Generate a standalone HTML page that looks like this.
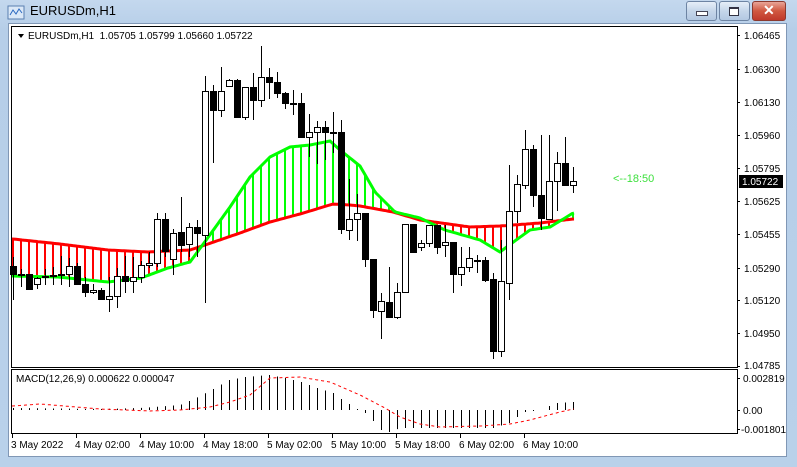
<!DOCTYPE html>
<html><head><meta charset="utf-8"><style>
html,body{margin:0;padding:0;width:797px;height:467px;overflow:hidden;background:#b9d1ea;font-family:"Liberation Sans",sans-serif}
#win{position:absolute;left:0;top:0;width:797px;height:467px;background:linear-gradient(#c4d8ee,#b6cee8 30px,#b9d1ea);}
#title{position:absolute;left:30px;top:3px;font-size:13px;color:#000}
.btn{position:absolute;top:1px;height:18px;border:1px solid #6d84a3;border-radius:3px;background:linear-gradient(#e6eef8,#c5d6ea 50%,#b3c8e2)}
#client{position:absolute;left:8px;top:23px;width:779px;height:434px;background:#fff;border:1px solid #8097b5;box-sizing:border-box}
svg{position:absolute;left:0;top:0}
.t{font-size:10px;fill:#000;font-family:"Liberation Sans",sans-serif}
</style></head><body>
<div id="win">
 <svg width="24" height="20" style="left:6px;top:4px"><rect x="2" y="2" width="16" height="13" fill="#dbe8f7" stroke="#5a7fb0"/><polyline points="4,11 7,6 10,10 13,5 16,9" fill="none" stroke="#2a68c0"/></svg>
 <div id="title">EURUSDm,H1</div>
 <div class="btn" style="left:686px;width:29px"><div style="position:absolute;left:9px;top:9px;width:10px;height:3px;background:#fff;border:1px solid #445"></div></div>
 <div class="btn" style="left:719px;width:29px"><div style="position:absolute;left:9px;top:5px;width:8px;height:6px;border:1px solid #334;border-top-width:2px;background:#fff"></div></div>
 <div class="btn" style="left:752px;width:32px;background:linear-gradient(#e8a598,#d0573f 50%,#c0392b);border-color:#8a3a30"><div style="position:absolute;left:10px;top:0;color:#fff;font-weight:bold;font-size:14px;line-height:17px">✕</div></div>
 <div id="client"></div>
 <svg id="s" width="797" height="467">
  <rect x="11.5" y="26.5" width="726" height="341" fill="none" stroke="#000"/>
  <rect x="11.5" y="369.5" width="726" height="64" fill="none" stroke="#000"/>
  <path d="M18 34 l6 0 l-3 4z" fill="#000"/>
  <text class="t" x="28" y="39" xml:space="preserve">EURUSDm,H1  1.05705 1.05799 1.05660 1.05722</text>
  <text class="t" x="16" y="382">MACD(12,26,9) 0.000622 0.000047</text>
  <text x="613" y="182" font-size="11" fill="#3ee03e" font-family="Liberation Sans">&lt;--18:50</text>
  <g id="g"></g>
  <text class="t" x="744" y="39">1.06465</text>
  <text class="t" x="744" y="73">1.06300</text>
  <text class="t" x="744" y="106">1.06130</text>
  <text class="t" x="744" y="139">1.05960</text>
  <text class="t" x="744" y="172">1.05795</text>
  <rect x="739" y="175" width="44" height="13" fill="#000"/>
  <text x="742" y="185" font-size="10" fill="#fff" font-family="Liberation Sans">1.05722</text>
  <text class="t" x="744" y="205">1.05625</text>
  <text class="t" x="744" y="238">1.05455</text>
  <text class="t" x="744" y="272">1.05290</text>
  <text class="t" x="744" y="304">1.05120</text>
  <text class="t" x="744" y="337">1.04950</text>
  <text class="t" x="744" y="369">1.04785</text>
  <text class="t" x="743" y="382">0.002819</text>
  <text class="t" x="743" y="414">0.00</text>
  <text class="t" x="741" y="433">-0.001801</text>
  <text class="t" x="11" y="448">3 May 2022</text>
  <text class="t" x="75" y="448">4 May 02:00</text>
  <text class="t" x="139" y="448">4 May 10:00</text>
  <text class="t" x="203" y="448">4 May 18:00</text>
  <text class="t" x="267" y="448">5 May 02:00</text>
  <text class="t" x="331" y="448">5 May 10:00</text>
  <text class="t" x="395" y="448">5 May 18:00</text>
  <text class="t" x="459" y="448">6 May 02:00</text>
  <text class="t" x="523" y="448">6 May 10:00</text>
 </svg>
</div>
<script>
var C=[[266,274,257,300,0],[274,275,269,287,0],[274,289,274,289,0],[278,284,277,289,1],[276,277,269,285,0],[275,276,267,285,0],[274,275,256,285,0],[266,274,258,287,1],[266,284,263,285,0],[284,292,277,297,0],[290,292,284,294,1],[290,299,288,300,0],[296,299,277,312,1],[276,296,268,308,1],[276,281,256,293,0],[277,281,257,293,1],[265,277,261,283,1],[263,265,252,268,1],[219,263,213,267,1],[219,251,213,257,0],[233,259,229,275,1],[232,245,197,252,0],[227,244,223,257,1],[227,233,220,257,0],
[91,235,76,303,1],[91,110,85,163,0],[91,110,67,117,1],[80,86,79,87,1],[80,117,79,118,0],[87,117,87,120,1],[87,100,73,120,0],[77,100,46,107,1],[77,82,68,99,0],[82,93,72,98,0],[93,103,92,109,0],[103,104,90,115,0],[103,137,93,137,0],[132,137,114,157,1],[127,132,121,164,1],[127,132,121,160,0],[132,133,112,153,0],[132,229,120,234,0],[219,230,179,240,1],[213,219,194,241,1],[213,259,213,267,0],[259,310,259,318,0],[301,311,293,339,1],[302,317,267,317,0],[292,317,283,319,1],[224,292,224,292,1],[224,252,224,252,0],[243,247,240,251,1],[225,243,225,247,1],[225,247,225,254,0],[242,245,225,257,1],[242,274,242,293,0],[267,274,247,286,1],[258,267,247,272,1],[260,261,255,273,0],[260,280,257,282,0],[279,351,273,359,0],[281,351,240,357,1],[211,283,165,300,1],[184,211,175,223,1],[149,185,130,189,1],[149,195,145,207,0],[195,218,135,230,0],[181,219,135,219,1],[163,181,152,211,1],[163,185,137,185,0],[181,185,167,193,1]];
function interp(p,x){for(var i=0;i<p.length-1;i++){if(x>=p[i][0]&&x<=p[i+1][0]){var t=(x-p[i][0])/(p[i+1][0]-p[i][0]);return p[i][1]+t*(p[i+1][1]-p[i][1]);}}return x<p[0][0]?p[0][1]:p[p.length-1][1];}
var R=[[13,239],[60,244],[108,250],[148,252],[190,250],[205,245],[240,233],[270,222],[300,214],[333,204],[350,205],[360,206],[393,212],[420,220],[470,227],[500,226],[540,223],[573,219]];
var G=[[13,276],[58,277],[108,282],[141,278],[168,268],[190,262],[204,243],[230,207],[250,177],[270,157],[290,147],[310,145],[330,141],[340,150],[360,166],[375,192],[395,212],[420,218],[445,230],[480,240],[500,252],[512,243],[530,230],[550,227],[565,218],[573,213]];
var H=[[13,408],[100,409],[140,408],[180,405],[200,396],[213,389],[229,380],[245,377],[269,375],[285,378],[301,382],[317,388],[333,393],[341,399],[349,404],[357,409],[365,413],[373,421],[381,430],[389,432],[400,428],[493,428],[509,423],[517,417],[525,412],[541,410],[549,406],[557,403],[573,402]];
var S=[[13,406],[40,404],[100,409],[150,411],[180,410],[210,407],[230,402],[250,395],[270,378],[300,377],[330,382],[360,395],[385,408],[400,417],[420,424],[440,427],[480,426],[510,424],[530,420],[560,412],[573,409]];
var o='';
for(var i=0;i<C.length;i++){var x=13+8*i,r=interp(R,x),g=interp(G,x);
 o+='<line x1="'+x+'" x2="'+x+'" y1="'+r+'" y2="'+g+'" stroke="'+(r<g?'#ff0000':'#00ff00')+'" stroke-width="2"/>';}
var pr='',pg='';for(var x=12;x<=574;x+=2){pr+=(x==12?'M':'L')+x+' '+interp(R,x).toFixed(1);pg+=(x==12?'M':'L')+x+' '+interp(G,x).toFixed(1);}
o+='<path d="'+pr+'" fill="none" stroke="#ff0000" stroke-width="3"/><path d="'+pg+'" fill="none" stroke="#00ff00" stroke-width="3"/>';
for(var i=0;i<C.length;i++){var c=C[i],x=13+8*i;
 o+='<line x1="'+(x+0.5)+'" x2="'+(x+0.5)+'" y1="'+c[2]+'" y2="'+c[3]+'" stroke="#000"/>';
 var h=Math.max(c[1]-c[0],1);
 o+='<rect x="'+(x-2.5)+'" y="'+(c[0]+0.5)+'" width="6" height="'+h+'" fill="'+(c[4]?'#fff':'#000')+'" stroke="#000"/>';}
for(var i=0;i<C.length;i++){var x=13+8*i,h=interp(H,x);o+='<line x1="'+(x+0.5)+'" x2="'+(x+0.5)+'" y1="410" y2="'+h+'" stroke="#000"/>';}
var ps='';for(var x=12;x<=574;x+=2){ps+=(x==12?'M':'L')+x+' '+interp(S,x).toFixed(1);}
o+='<path d="'+ps+'" fill="none" stroke="#ff0000" stroke-dasharray="3,3"/>';
var tx=[12,76,140,204,268,332,396,460,524];for(var i=0;i<tx.length;i++)o+='<line x1="'+(tx[i]+.5)+'" x2="'+(tx[i]+.5)+'" y1="434" y2="438" stroke="#000"/>';
var ty=[35,69,102,135,168,201,234,268,300,333,366,378,410,429];for(var i=0;i<ty.length;i++)o+='<line x1="737" x2="740" y1="'+(ty[i]+.5)+'" y2="'+(ty[i]+.5)+'" stroke="#000"/>';
document.getElementById('g').innerHTML=o;
</script>
</body></html>
